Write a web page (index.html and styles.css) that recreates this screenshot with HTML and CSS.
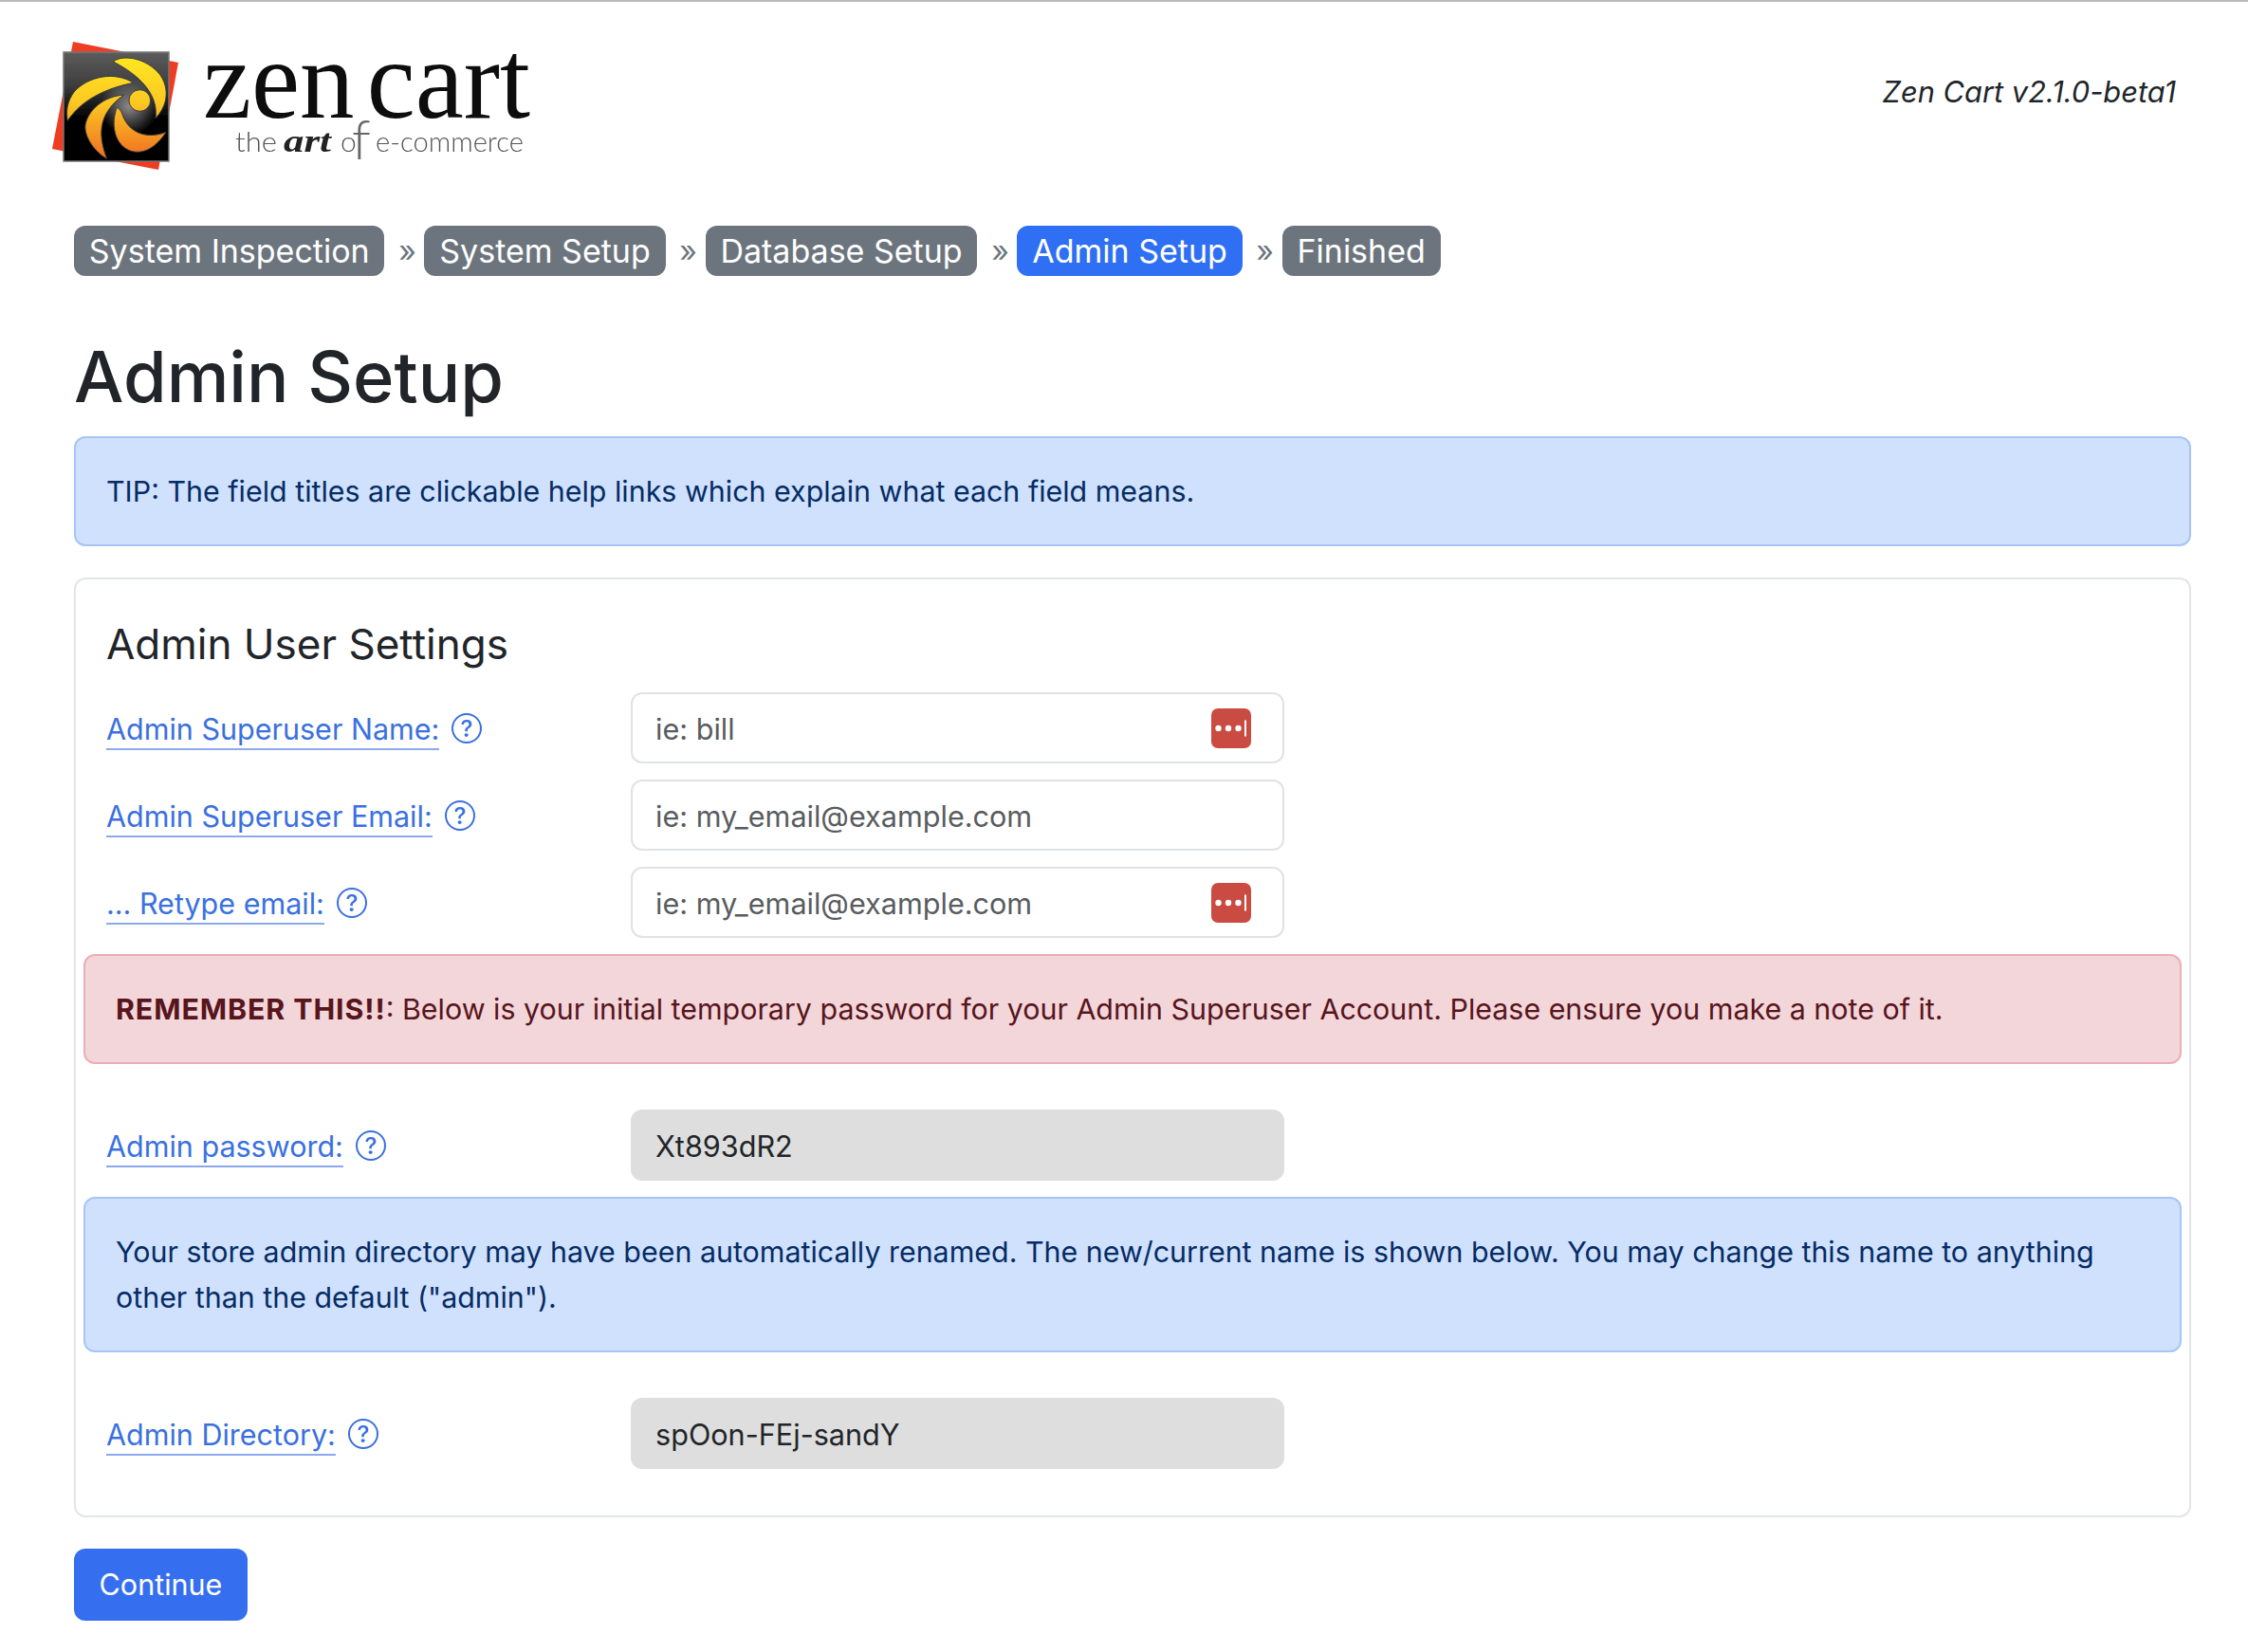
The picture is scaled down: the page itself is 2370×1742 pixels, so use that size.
FILE: index.html
```html
<!DOCTYPE html>
<html lang="en">
<head>
<meta charset="utf-8">
<title>Zen Cart Setup - Admin Setup</title>
<link rel="stylesheet" href="styles.css">
</head>
<body>
<svg class="sprite" width="0" height="0" aria-hidden="true">
  <defs>
    <symbol id="help" viewBox="0 0 16 16">
      <path d="M8 15A7 7 0 1 1 8 1a7 7 0 0 1 0 14zm0 1A8 8 0 1 0 8 0a8 8 0 0 0 0 16z"/>
      <path d="M5.255 5.786a.237.237 0 0 0 .241.247h.825c.138 0 .248-.113.266-.25.09-.656.54-1.134 1.342-1.134.686 0 1.314.343 1.314 1.168 0 .635-.374.927-.965 1.371-.673.489-1.206 1.06-1.168 1.987l.003.217a.25.25 0 0 0 .25.246h.811a.25.25 0 0 0 .25-.25v-.105c0-.718.273-.927 1.01-1.486.609-.463 1.244-.977 1.244-2.056 0-1.511-1.276-2.241-2.673-2.241-1.267 0-2.655.59-2.75 2.286zm1.557 5.763c0 .533.425.927 1.01.927.609 0 1.028-.394 1.028-.927 0-.552-.42-.94-1.029-.94-.584 0-1.009.388-1.009.94z"/>
    </symbol>
    <symbol id="pass" viewBox="0 0 42 42">
      <rect width="42" height="42" rx="7" fill="#c94b42"/>
      <circle cx="7.5" cy="21" r="3.2" fill="#fff"/>
      <circle cx="18" cy="21" r="3.2" fill="#fff"/>
      <circle cx="28.5" cy="21" r="3.2" fill="#fff"/>
      <rect x="35" y="12.5" width="2" height="17" fill="#fff"/>
    </symbol>
  </defs>
</svg>
<div class="page">
  <header class="top">
    <svg class="logo" viewBox="40 10 530 180" width="530" height="180" role="img" aria-label="Zen Cart">
      <defs>
        <linearGradient id="sw" gradientUnits="userSpaceOnUse" x1="0" y1="90" x2="0" y2="410">
          <stop offset="0" stop-color="#ffe81f"/>
          <stop offset="0.45" stop-color="#fcc824"/>
          <stop offset="1" stop-color="#ef6f20"/>
        </linearGradient>
        <linearGradient id="sq" x1="0" y1="0" x2="0" y2="1">
          <stop offset="0" stop-color="#5c5c5c"/>
          <stop offset="0.3" stop-color="#3e3e3e"/>
          <stop offset="0.58" stop-color="#060606"/>
          <stop offset="1" stop-color="#000"/>
        </linearGradient>
        <radialGradient id="glow">
          <stop offset="0" stop-color="#8a8a8a"/>
          <stop offset="1" stop-color="#8a8a8a" stop-opacity="0"/>
        </radialGradient>
        <filter id="soft"><feGaussianBlur stdDeviation="0.6"/></filter>
        <filter id="softer"><feGaussianBlur stdDeviation="0.55"/></filter>
      </defs>
      <g filter="url(#soft)">
        <polygon points="77,44 188,66 167,179 55,157" fill="#ee3d20"/>
        <rect x="67" y="55" width="111" height="115" fill="url(#sq)" stroke="#777" stroke-width="1.5"/>
        <circle cx="136" cy="112" r="30" fill="url(#glow)"/>
        <g transform="translate(40 30) scale(0.3333)" fill="url(#sw)" stroke="#3a3a3a" stroke-width="3">
          <path d="M238 105C270 80 345 95 385 145C418 190 410 245 372 284C380 225 345 160 238 105Z"/>
          <path d="M302 172C245 135 160 150 115 200C92 230 88 265 94 292C125 245 185 195 302 172Z"/>
          <path d="M272 210C210 215 160 255 150 305C145 345 185 395 218 412C195 350 180 275 272 210Z"/>
          <path d="M250 250C230 300 240 370 295 388C345 402 385 360 405 328C350 350 290 335 268 275C264 262 256 252 250 250Z"/>
          <circle cx="322" cy="228" r="34"/>
        </g>
      </g>
      <g filter="url(#softer)">
        <text class="logo-name" x="214" y="124" textLength="345" lengthAdjust="spacingAndGlyphs">zen cart</text>
        <text class="logo-tag" x="248" y="160" textLength="44" lengthAdjust="spacingAndGlyphs">the</text>
        <text class="logo-art" x="299" y="160" textLength="50" lengthAdjust="spacingAndGlyphs">art</text>
        <text class="logo-tag" x="359" y="160">o</text>
        <text class="logo-f" x="371" y="168">f</text>
        <text class="logo-tag" x="396" y="160" textLength="156" lengthAdjust="spacingAndGlyphs">e-commerce</text>
      </g>
    </svg>
    <p class="version">Zen Cart v2.1.0-beta1</p>
  </header>

  <nav class="steps">
    <span class="pill">System Inspection</span><span class="sep">»</span>
    <span class="pill">System Setup</span><span class="sep">»</span>
    <span class="pill">Database Setup</span><span class="sep">»</span>
    <span class="pill pill-active">Admin Setup</span><span class="sep">»</span>
    <span class="pill">Finished</span>
  </nav>

  <h1 class="title">Admin Setup</h1>

  <div class="alert alert-info">TIP: The field titles are clickable help links which explain what each field means.</div>

  <form class="card">
    <h2 class="card-title">Admin User Settings</h2>

    <div class="row">
      <div class="label"><a class="field-link">Admin Superuser Name:</a><svg class="help"><use href="#help"/></svg></div>
      <div class="input"><span class="ph">ie: bill</span><svg class="pass"><use href="#pass"/></svg></div>
    </div>
    <div class="row">
      <div class="label"><a class="field-link">Admin Superuser Email:</a><svg class="help"><use href="#help"/></svg></div>
      <div class="input"><span class="ph">ie: my_email@example.com</span></div>
    </div>
    <div class="row">
      <div class="label"><a class="field-link">... Retype email:</a><svg class="help"><use href="#help"/></svg></div>
      <div class="input"><span class="ph">ie: my_email@example.com</span><svg class="pass"><use href="#pass"/></svg></div>
    </div>

    <div class="alert alert-danger inset"><strong class="shout">REMEMBER THIS!!</strong>: Below is your initial temporary password for your Admin Superuser Account. Please ensure you make a note of it.</div>

    <div class="row row-after">
      <div class="label"><a class="field-link">Admin password:</a><svg class="help"><use href="#help"/></svg></div>
      <div class="input input-ro">Xt893dR2</div>
    </div>

    <div class="alert alert-info inset">Your store admin directory may have been automatically renamed. The new/current name is shown below. You may change this name to anything other than the default ("admin").</div>

    <div class="row row-after">
      <div class="label"><a class="field-link">Admin Directory:</a><svg class="help"><use href="#help"/></svg></div>
      <div class="input input-ro">spOon-FEj-sandY</div>
    </div>
  </form>

  <button class="btn" type="button">Continue</button>
</div>
</body>
</html>
```
FILE: styles.css
```css
* { box-sizing: border-box; }
html, body { margin: 0; padding: 0; }
body {
  background: #fff;
  color: #212529;
  font-family: Inter, "Liberation Sans", sans-serif;
  font-size: 30.5px;
  line-height: 48px;
  border-top: 2px solid #bcbcbc;
  min-height: 1742px;
}
.sprite { position: absolute; }
.page { padding: 0 60px 0 78px; }

.top {
  display: flex;
  justify-content: space-between;
  align-items: flex-start;
  margin-left: -38px;
  margin-right: 16px;
  padding-top: 8px;
  height: 236px;
}
.logo { display: block; }
.logo-name { font-family: "Liberation Serif", serif; font-size: 118px; word-spacing: -16px; fill: #111; }
.logo-tag { font-family: Lato, sans-serif; font-weight: 300; font-size: 30px; fill: #555; }
.logo-f { font-family: Lato, sans-serif; font-weight: 300; font-size: 58px; fill: #666; }
.logo-art { font-family: "Liberation Serif", serif; font-style: italic; font-weight: 700; font-size: 34px; fill: #222; }
.version {
  margin: 67px 0 0;
  font-size: 30.8px;
  line-height: 40px;
  font-style: italic;
}

.steps { display: flex; align-items: center; height: 53px; }
.pill {
  display: block;
  background: #6c757d;
  color: #fff;
  border-radius: 12px;
  padding: 0 15.8px;
  height: 53px;
  line-height: 53px;
  font-size: 34px;
}
.pill-active { background: #2f6ff3; }
.sep { width: 42px; padding-left: 6px; text-align: center; color: #6c757d; font-size: 32px; line-height: 50px; }

.title {
  margin: 0;
  padding-top: 52px;
  font-size: 74px;
  line-height: 109px;
  font-weight: 500;
  height: 169px;
}

.alert {
  border: 2px solid;
  border-radius: 12px;
  padding: 32px;
  font-size: 30.4px;
  line-height: 48px;
}
.alert-info { background: #d0e1fd; border-color: #a6c4f7; color: #052c65; }
.alert-danger { background: #f3d6da; border-color: #ecaeb4; color: #58151c; }
.shout { letter-spacing: 0.9px; }
.inset { margin: 0 -24px; }

.card {
  margin-top: 33px;
  border: 2px solid #e3e5e8;
  border-radius: 12px;
  padding: 40px 32px 48px;
  height: 991px;
}
.card-title {
  margin: 0 0 23px;
  font-size: 44px;
  line-height: 56px;
  font-weight: 400;
}
.row { display: flex; align-items: center; margin-bottom: 17px; }
.row-after { margin-top: 48px; }
.label { width: 553px; display: flex; align-items: center; }
.field-link {
  color: #3a70e0;
  border-bottom: 2px solid #8ba9ec;
  line-height: 41px;
  padding-top: 3px;
}
.help { width: 32px; height: 32px; margin-left: 13px; fill: #3a70e0; }

.input {
  width: 689px;
  height: 75px;
  border: 2px solid #e0e2e6;
  border-radius: 12px;
  padding: 2px 24px 0;
  font-size: 30.6px;
  display: flex;
  align-items: center;
  justify-content: space-between;
}
.ph { color: #595c5f; }
.pass { width: 42px; height: 42px; margin-right: 9px; margin-top: -2px; }
.input-ro { background: #dedede; border-color: #dedede; color: #212529; }

.btn {
  display: block;
  margin-top: 33px;
  width: 183px;
  height: 76px;
  background: #356ff0;
  color: #fff;
  border: 0;
  border-radius: 12px;
  font: inherit;
  padding: 0;
}
```
